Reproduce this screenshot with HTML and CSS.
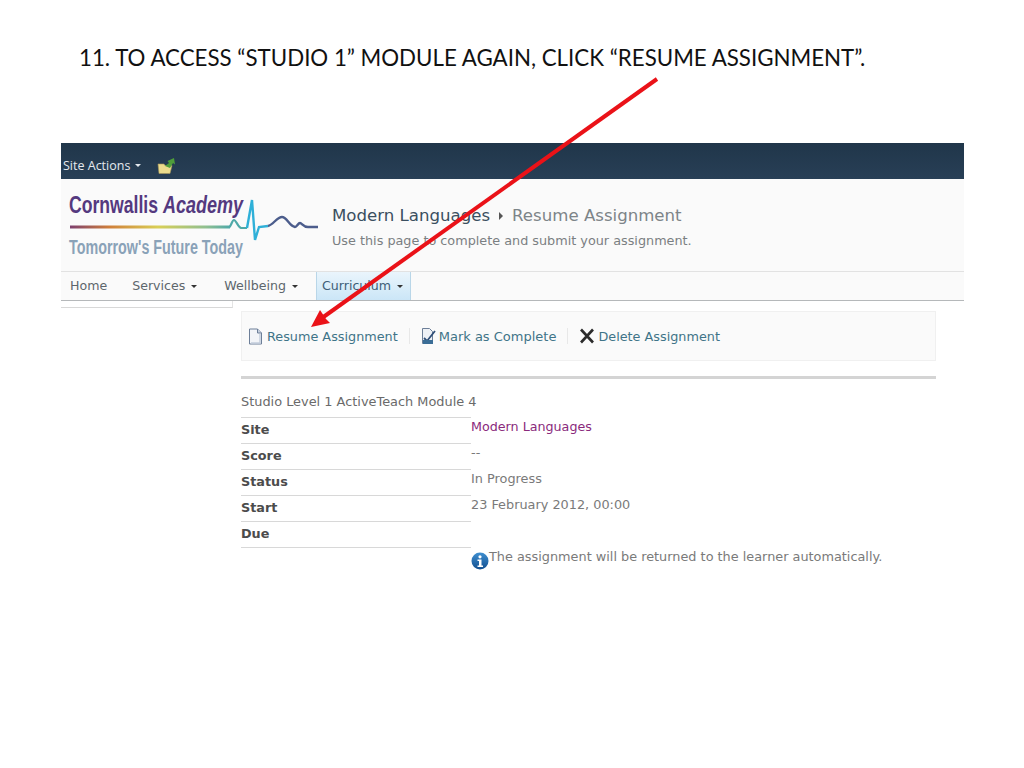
FILE: index.html
```html
<!DOCTYPE html>
<html lang="en">
<head>
  <meta charset="UTF-8">
  <title>Resume Assignment</title>
  <link rel="stylesheet" href="styles.css">
</head>
<body>
  <h1 class="slide-title">11. TO ACCESS “STUDIO 1” MODULE AGAIN, CLICK “RESUME ASSIGNMENT”.</h1>

  <div class="shot">
    <div class="top-bar">
      <span class="site-actions">Site Actions</span>
      <span class="caret caret-light"></span>
      <svg class="folder-icon" width="19" height="18" viewBox="0 0 19 18">
        <path d="M1 7h6l1 1.500h7l-2 8H2z" fill="#ecdc8c" stroke="#a8975a" stroke-width="0.600"/>
        <path d="M8 9l4-3-1.500-2L17 1l1 6.500-2-1.500-3 5z" fill="#4f9e3a"/>
      </svg>
    </div>

    <div class="header">
      <svg class="logo" width="262" height="92" viewBox="0 0 262 92">
        <defs>
          <linearGradient id="rainbow" x1="0" x2="1" y1="0" y2="0">
            <stop offset="0" stop-color="#7d3f6e"/>
            <stop offset="0.25" stop-color="#d0803a"/>
            <stop offset="0.55" stop-color="#d9cf55"/>
            <stop offset="0.85" stop-color="#8fbf90"/>
            <stop offset="1" stop-color="#4fa9a8"/>
          </linearGradient>
        </defs>
        <text class="logo-name" transform="translate(8 34) scale(1 1.350)" textLength="89" lengthAdjust="spacingAndGlyphs">Cornwallis</text>
        <text class="logo-name logo-italic" transform="translate(102 34) scale(1 1.350)" textLength="80" lengthAdjust="spacingAndGlyphs">Academy</text>
        <rect x="9" y="46.500" width="160" height="3" fill="url(#rainbow)"/>
        <path d="M168 48c2 0 3-7 5-7s4 7 7 8l6 0" fill="none" stroke="#4fa9a8" stroke-width="2.200"/>
        <path d="M186 49l5-28 3 40 4-13 9-1" fill="none" stroke="#2fb0d8" stroke-width="2.400"/>
        <path d="M207 47c5-1 9-9 14-9s7 9 13 10c2 0 3-4 5-4s3 4 8 4h10" fill="none" stroke="#4c5d8c" stroke-width="2.400"/>
        <text class="logo-tag" x="8" y="75" textLength="174" lengthAdjust="spacingAndGlyphs">Tomorrow's Future Today</text>
      </svg>
      <div class="page-title">
        <div class="crumbs">
          <span class="crumb-site">Modern Languages</span>
          <span class="crumb-sep"></span>
          <span class="crumb-page">Resume Assignment</span>
        </div>
        <div class="page-desc">Use this page to complete and submit your assignment.</div>
      </div>
    </div>

    <div class="nav">
      <span class="nav-item">Home</span>
      <span class="nav-item">Services<span class="caret"></span></span>
      <span class="nav-item">Wellbeing<span class="caret"></span></span>
      <span class="nav-item nav-active">Curriculum<span class="caret"></span></span>
    </div>

    <div class="main">
      <div class="side-stub"></div>
      <div class="content">
        <div class="toolbar">
          <span class="tool tool-resume">
            <svg width="15" height="17" viewBox="0 0 15 17">
              <path d="M1.500 1h8l4 4v11h-12z" fill="#f2f4f8" stroke="#6d7f98"/>
              <path d="M9.500 1v4h4" fill="#c6d0e0" stroke="#6d7f98"/>
              <path d="M12 6v9H3" fill="none" stroke="#c3cddc" stroke-width="1.500"/>
            </svg>
            Resume Assignment
          </span>
          <span class="tool-sep"></span>
          <span class="tool tool-mark">
            <svg width="16" height="18" viewBox="0 0 16 18">
              <path d="M1.500 1.500h7l3 3v12h-10z" fill="#eef1f6" stroke="#6d7f98"/>
              <path d="M3 11l3 3 8-10" fill="none" stroke="#2f4f78" stroke-width="1.800"/>
              <rect x="2" y="13" width="10" height="4" fill="#3a6d96"/>
            </svg>
            Mark as Complete
          </span>
          <span class="tool-sep"></span>
          <span class="tool tool-delete">
            <svg width="16" height="16" viewBox="0 0 16 16">
              <path d="M2 1.500l12 13M14 1.500l-12 13" stroke="#2b2b2b" stroke-width="2.600"/>
            </svg>
            Delete Assignment
          </span>
        </div>

        <div class="rule"></div>
        <div class="module-name">Studio Level 1 ActiveTeach Module 4</div>

        <div class="details">
          <div class="labels">
            <div class="label">Site</div>
            <div class="label">Score</div>
            <div class="label">Status</div>
            <div class="label">Start</div>
            <div class="label">Due</div>
          </div>
          <div class="values">
            <div class="value value-link">Modern Languages</div>
            <div class="value">--</div>
            <div class="value">In Progress</div>
            <div class="value">23 February 2012, 00:00</div>
            <div class="value"></div>
            <div class="value">
              <svg class="info-icon" width="18" height="18" viewBox="0 0 18 18">
                <defs>
                  <linearGradient id="infoFill" x1="0" x2="0" y1="0" y2="1">
                    <stop offset="0" stop-color="#3f8fd0"/>
                    <stop offset="1" stop-color="#124f90"/>
                  </linearGradient>
                </defs>
                <circle cx="9" cy="9" r="8.500" fill="url(#infoFill)"/>
                <circle cx="9" cy="4.800" r="1.600" fill="#fff"/>
                <path d="M6.500 7.500h4v6h1.500v1.500H6.500v-1.500H8v-4.500H6.500z" fill="#fff"/>
              </svg>
              The assignment will be returned to the learner automatically.
            </div>
          </div>
        </div>
      </div>
    </div>
  </div>

  <!-- red arrow drawn over the screenshot -->
  <svg class="arrow" width="1024" height="768" viewBox="0 0 1024 768">
    <path d="M657 79L322 318" stroke="#ea1218" stroke-width="4" fill="none"/>
    <path d="M311 327l9-17 4 6 2 3 4 4z" fill="#ea1218"/>
  </svg>
</body>
</html>
```

FILE: styles.css
```css
html, body {
  margin: 0;
  padding: 0;
  background-color: #fff;
}

body {
  width: 1024px;
  height: 768px;
  overflow: hidden;
  font-family: "DejaVu Sans", sans-serif;
}

.slide-title {
  margin: 0;
  padding: 44px 0 0 79px;
  height: 143px;
  box-sizing: border-box;
  font-family: Lato, "Liberation Sans", sans-serif;
  font-size: 22.300px;
  line-height: 28px;
  font-weight: normal;
  color: #111;
}

.shot {
  width: 903px;
  margin-left: 61px;
}

.top-bar {
  height: 36px;
  box-sizing: border-box;
  display: flex;
  align-items: center;
  padding: 8px 0 0 2px;
  background: linear-gradient(#20364a, #283f56);
  color: #e4e9ee;
}

.site-actions {
  font-family: "Open Sans", sans-serif;
  font-size: 12.500px;
}

.caret {
  display: inline-block;
  width: 0;
  height: 0;
  margin-left: 5px;
  vertical-align: 2px;
  border-left: 3px solid transparent;
  border-right: 3px solid transparent;
  border-top: 3px solid #333;
}

.caret-light {
  border-top-color: #e4e9ee;
}

.folder-icon {
  margin-left: 16px;
  margin-top: 2px;
}

.header {
  height: 92px;
  display: flex;
  background-color: #fafafa;
}

.logo-name {
  font-family: "Liberation Sans", sans-serif;
  font-size: 18px;
  font-weight: bold;
  fill: #54397f;
}

.logo-italic {
  font-style: italic;
}

.logo-tag {
  font-family: "Liberation Sans Narrow", "Liberation Sans", sans-serif;
  font-size: 20px;
  font-weight: bold;
  fill: #8aa2b8;
}

.page-title {
  margin-left: 9px;
  padding-top: 26px;
}

.crumbs {
  display: flex;
  align-items: center;
  height: 20px;
  font-size: 16.600px;
}

.crumb-site {
  color: #3a4f60;
}

.crumb-sep {
  margin: 2px 9px 0 9px;
  border-top: 4px solid transparent;
  border-bottom: 4px solid transparent;
  border-left: 4px solid #555;
}

.crumb-page {
  color: #7d8488;
}

.page-desc {
  margin-top: 8px;
  font-size: 12.800px;
  color: #7a7f82;
}

.nav {
  height: 28px;
  display: flex;
  background-color: #fafafa;
  border-top: 1px solid #e2e2e2;
  border-bottom: 1px solid #b5b8ba;
  font-size: 12.600px;
  color: #5d666c;
}

.nav-item {
  display: flex;
  align-items: center;
  padding: 0 8px 1px 9px;
  margin-right: 8px;
}

.nav-item .caret {
  margin: 1px 2px 0 6px;
}

.nav-active {
  padding: 0 5px 1px 5px;
  background: linear-gradient(#eaf5fc, #cbe6f7);
  border-left: 1px solid #b9d6e8;
  border-right: 1px solid #b9d6e8;
  color: #3f5f78;
}

.main {
  display: flex;
}

.side-stub {
  width: 171px;
  height: 6px;
  border-bottom: 1px solid #d8d8d8;
  border-right: 1px solid #e4e4e4;
}

.content {
  width: 695px;
  margin-left: 8px;
  padding-top: 10px;
}

.toolbar {
  height: 48px;
  display: flex;
  align-items: center;
  padding-left: 6px;
  background-color: #fafafa;
  border: 1px solid #f0f0f0;
  font-size: 12.800px;
  color: #3f7488;
}

.tool {
  display: flex;
  align-items: center;
  gap: 4px;
}

.tool-mark {
  gap: 2px;
  font-size: 13px;
}

.tool-delete {
  gap: 3px;
}

.tool-sep {
  width: 1px;
  height: 16px;
  margin: 0 11px;
  background-color: #e8e8e8;
}

.rule {
  height: 3px;
  margin-top: 15px;
  background-color: #d4d4d4;
}

.module-name {
  height: 38px;
  padding-top: 15px;
  box-sizing: border-box;
  font-size: 12.900px;
  line-height: 16px;
  color: #6a6a6a;
}

.details {
  display: flex;
}

.labels {
  width: 230px;
  border-top: 1px solid #d8d8d8;
}

.label {
  height: 25px;
  border-bottom: 1px solid #d8d8d8;
  font-size: 12.800px;
  font-weight: bold;
  line-height: 24px;
  color: #4c4c4c;
}

.values {
  padding-top: 1px;
}

.value {
  height: 26px;
  font-size: 12.850px;
  line-height: 18px;
  color: #7a7a7a;
  white-space: nowrap;
  display: flex;
}

.value-link {
  font-size: 12.700px;
  color: #8a2a7c;
}

.info-icon {
  margin: 4px 0 0 0;
}

.arrow {
  position: absolute;
  top: 0;
  left: 0;
}
```
